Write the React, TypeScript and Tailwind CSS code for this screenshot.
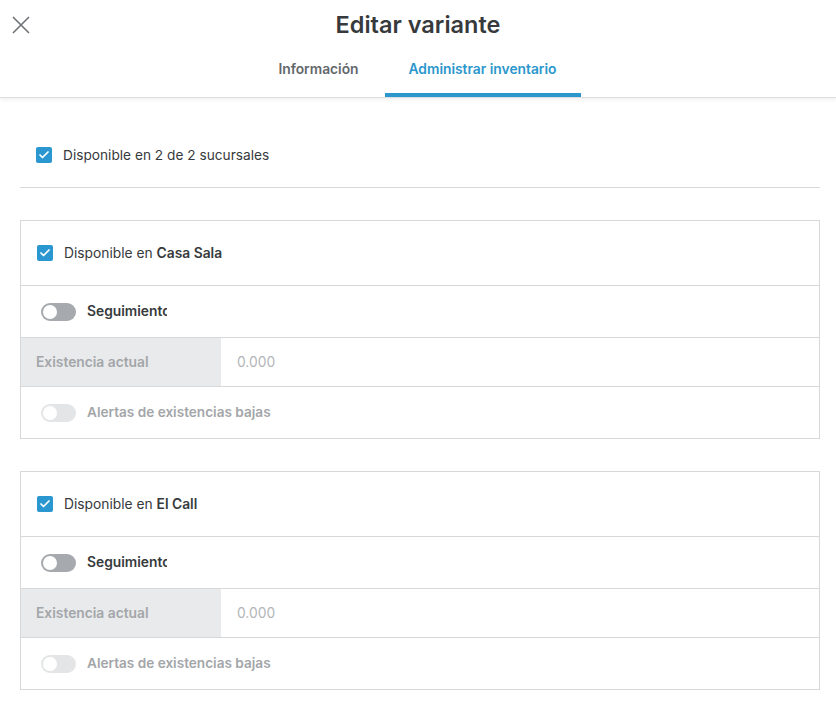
import { Check } from 'lucide-react';

const font = { fontFamily: 'Inter, "Liberation Sans", sans-serif' };

const LOCATIONS = ['Casa Sala', 'El Call'];

function Checkbox() {
  return (
    <span className="flex h-4 w-4 shrink-0 items-center justify-center rounded-[2px] bg-[#2b97d0]">
      <Check className="h-3 w-3 text-white" strokeWidth={3.5} />
    </span>
  );
}

function Toggle({ disabled }: { disabled?: boolean }) {
  return (
    <span
      className={
        'flex h-[18px] w-[35px] shrink-0 items-center rounded-full px-[2px] ' +
        (disabled ? 'bg-[#e3e5e7]' : 'bg-[#a6a9ad]')
      }
    >
      <span className="h-[14px] w-[14px] rounded-full bg-white" />
    </span>
  );
}

function LocationCard({ name }: { name: string }) {
  return (
    <div className="border border-[#d6d8da]">
      <div className="flex h-[65px] items-center gap-[11px] border-b border-[#d6d8da] pl-4">
        <Checkbox />
        <span className="text-[13.8px] text-[#373a3c]">
          Disponible en <span className="font-semibold">{name}</span>
        </span>
      </div>
      <div className="flex h-[52px] items-center gap-[11px] border-b border-[#d6d8da] pl-5">
        <Toggle />
        {/* label is clipped in the original too */}
        <span className="w-[80px] overflow-hidden whitespace-nowrap text-[13.8px] font-semibold text-[#373a3c]">
          Seguimiento
        </span>
      </div>
      <div className="flex h-[49px] border-b border-[#d6d8da]">
        <div className="flex w-[200px] items-center bg-[#e9eaec] pl-[15px] text-[13.8px] font-semibold text-[#a3a6a9]">
          Existencia actual
        </div>
        <div className="flex items-center pl-4 text-[13.8px] text-[#b3b6b9]">0.000</div>
      </div>
      <div className="flex h-[51px] items-center gap-[11px] pl-5">
        <Toggle disabled />
        <span className="text-[13.6px] font-semibold text-[#a3a6a9]">Alertas de existencias bajas</span>
      </div>
    </div>
  );
}

export default function App() {
  return (
    <div className="min-h-screen bg-white" style={font}>
      <header className="relative border-b border-[#dcdde0] shadow-[0_2px_4px_rgba(0,0,0,0.06)]">
        <button className="absolute left-[12px] top-[16px]">
          <svg width="18" height="18" viewBox="0 0 18 18" fill="none" stroke="#6d7175" strokeWidth="1.6">
            <path d="M1 1 L17 17 M17 1 L1 17" />
          </svg>
        </button>
        <h1 className="pt-[10px] text-center text-[23.5px] font-semibold leading-[30px] text-[#373a3c]">
          Editar variante
        </h1>
        <nav className="mt-[6px] flex justify-center">
          <div className="flex">
            <div className="flex h-[51px] w-[126px] items-center justify-center pb-[4px] text-[13.8px] font-semibold text-[#63676b]">
              Información
            </div>
            <div className="ml-[3px] flex h-[51px] w-[196px] items-center justify-center border-b-4 border-[#2b97cc] text-[13.8px] font-semibold text-[#2b97cc]">
              Administrar inventario
            </div>
          </div>
        </nav>
      </header>

      <main className="pl-5 pr-4 pt-[47px]">
        <div className="flex items-center gap-[11px] pb-[22px] pl-4">
          <Checkbox />
          <span className="text-[13.7px] leading-5 text-[#373a3c]">Disponible en 2 de 2 sucursales</span>
        </div>
        <div className="border-t border-[#d6d8da]" />

        <div className="mt-[32px] space-y-[32px]">
          {LOCATIONS.map((name) => (
            <LocationCard key={name} name={name} />
          ))}
        </div>
      </main>
    </div>
  );
}
